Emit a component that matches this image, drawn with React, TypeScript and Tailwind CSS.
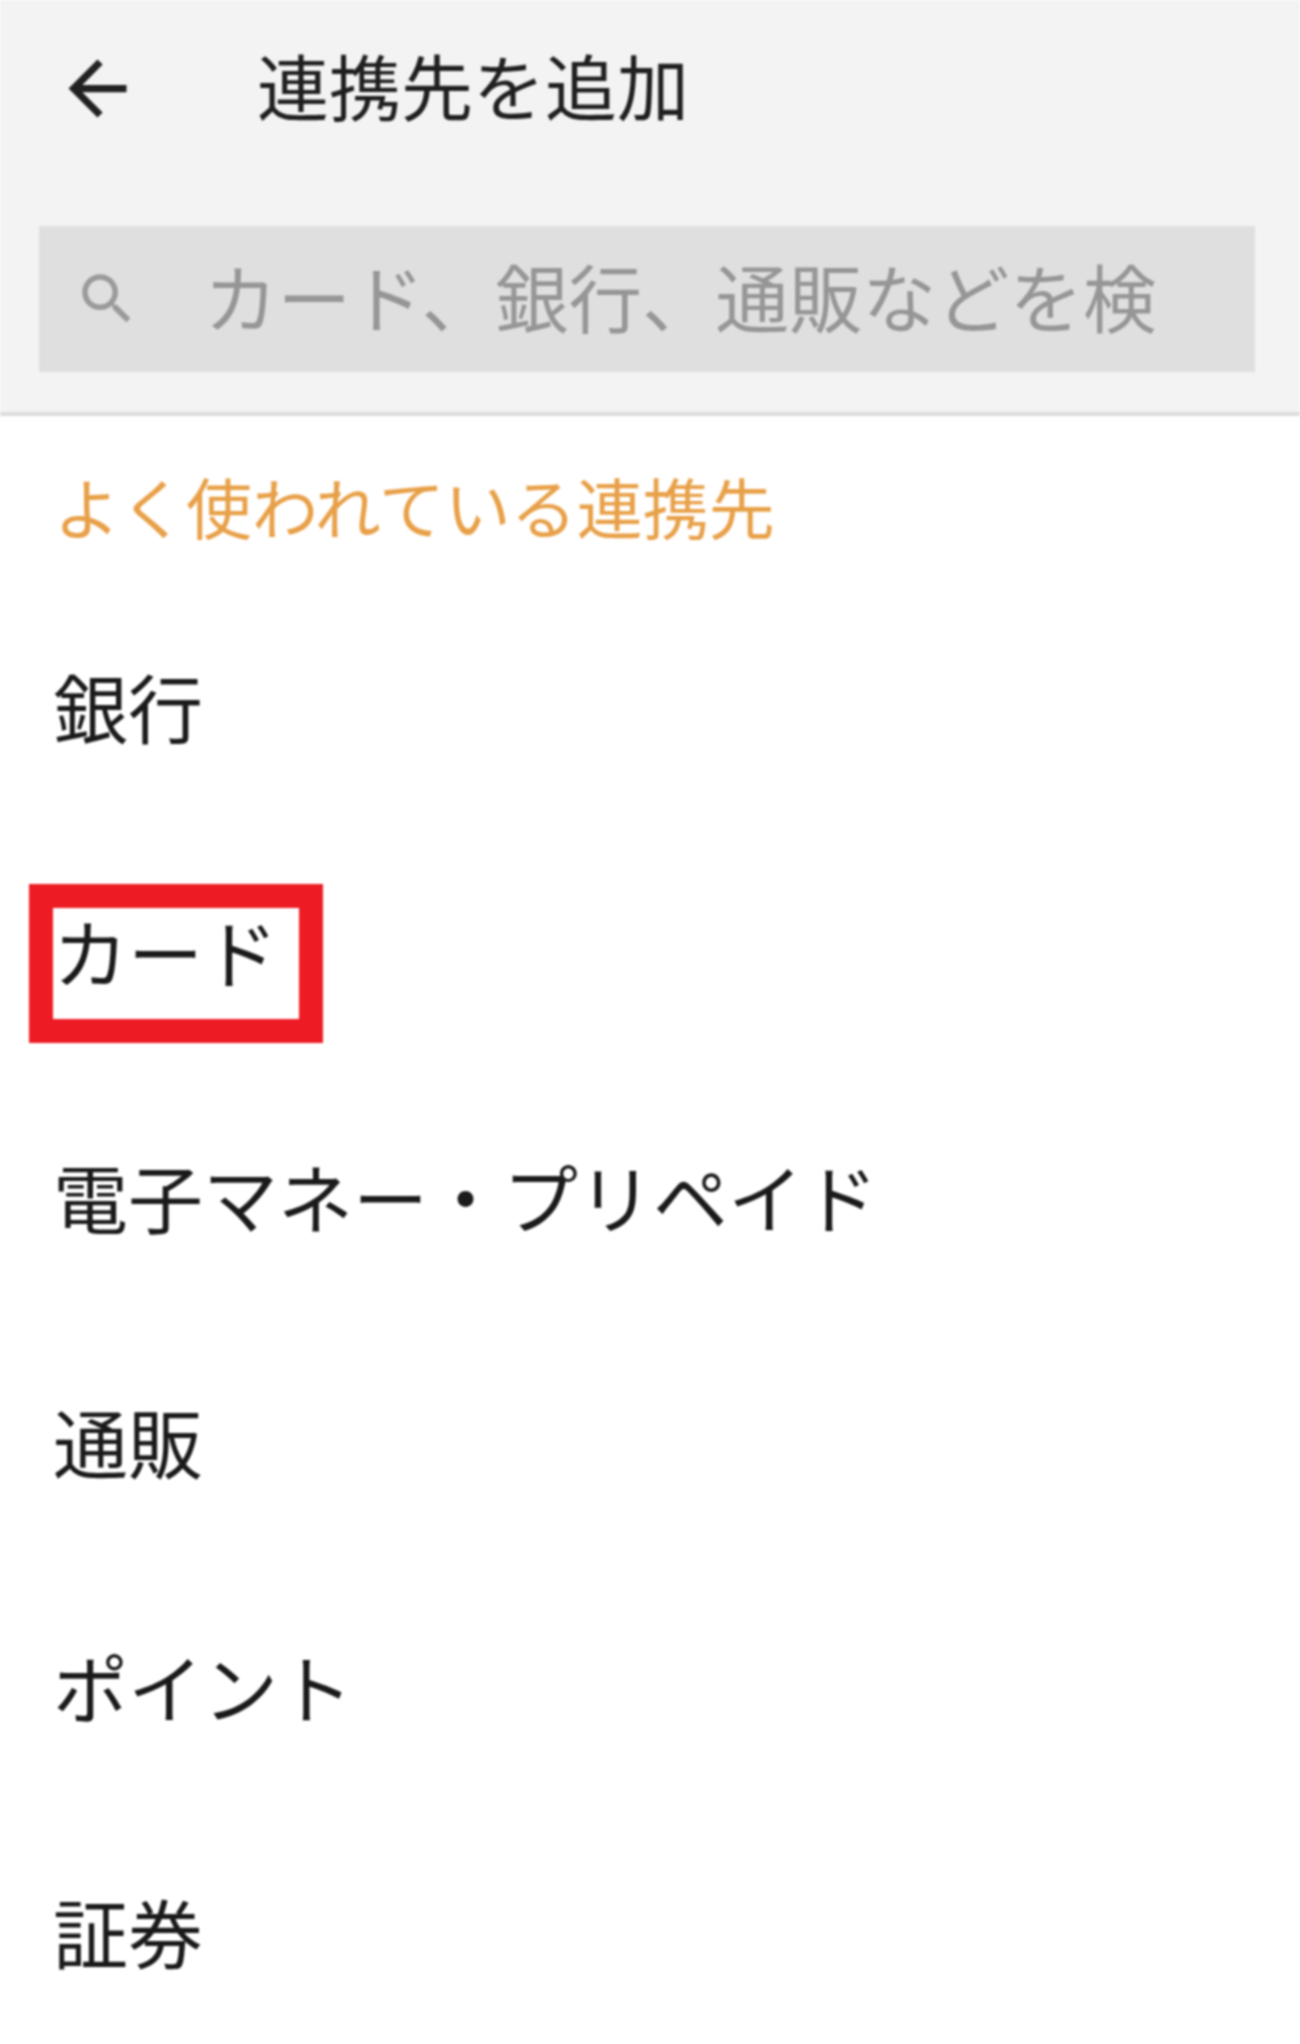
const FONT = "font-['Noto_Sans_CJK_JP','Noto_Sans',sans-serif]"

const ITEMS = ['銀行', 'カード', '電子マネー・プリペイド', '通販', 'ポイント', '証券']

function ArrowBack() {
  return (
    <svg viewBox="0 0 24 24" className="h-[87px] w-[87px] fill-[#212121]">
      <path d="M20 11H7.83l5.59-5.59L12 4l-8 8 8 8 1.41-1.41L7.83 13H20v-2z" />
    </svg>
  )
}

function SearchIcon() {
  return (
    <svg viewBox="0 0 24 24" className="h-[66px] w-[66px] shrink-0 fill-[#9a9a9a]">
      <path d="M15.5 14h-.79l-.28-.27C15.41 12.59 16 11.11 16 9.5 16 5.91 13.09 3 9.5 3S3 5.91 3 9.5 5.91 16 9.5 16c1.61 0 3.09-.59 4.23-1.57l.27.28v.79l5 4.99L20.49 19l-4.99-5zm-6 0C7.01 14 5 11.99 5 9.5S7.01 5 9.5 5 14 7.01 14 9.5 11.99 14 9.5 14z" />
    </svg>
  )
}

export default function App() {
  return (
    <div className={`h-[2044px] w-[1300px] overflow-hidden bg-white ${FONT} blur-[1.2px]`}>
      <header className="h-[416px] border-b-[4px] border-[#dcdcdc] bg-[#f3f3f3]">
        <div className="flex h-[176px] items-center pl-[54px]">
          <ArrowBack />
          <h1 className="mb-[8px] ml-[116px] text-[72px] leading-none font-normal text-[#1f1f1f]">連携先を追加</h1>
        </div>
        <div className="mt-[50px] ml-[39px] flex h-[146px] w-[1216px] items-center bg-[#dfdfdf] pl-[35px]">
          <SearchIcon />
          <span className="mb-[6px] ml-[64px] text-[73.5px] leading-none whitespace-nowrap text-[#969696]">
            カード、銀行、通販などを検
          </span>
        </div>
      </header>

      <p className="pt-[57px] pl-[54px] text-[66px] leading-[64px] text-[#e8a048]">よく使われている連携先</p>

      <ul className="mt-[46px]">
        {ITEMS.map((item) => (
          <li key={item} className="relative flex h-[245px] items-center pl-[53px] text-[75px] leading-none text-[#1a1a1a]">
            {item}
            {item === 'カード' && (
              <span className="absolute top-[56px] left-[29px] h-[159px] w-[294px] border-[24px] border-[#ed1c24]" />
            )}
          </li>
        ))}
      </ul>
    </div>
  )
}
